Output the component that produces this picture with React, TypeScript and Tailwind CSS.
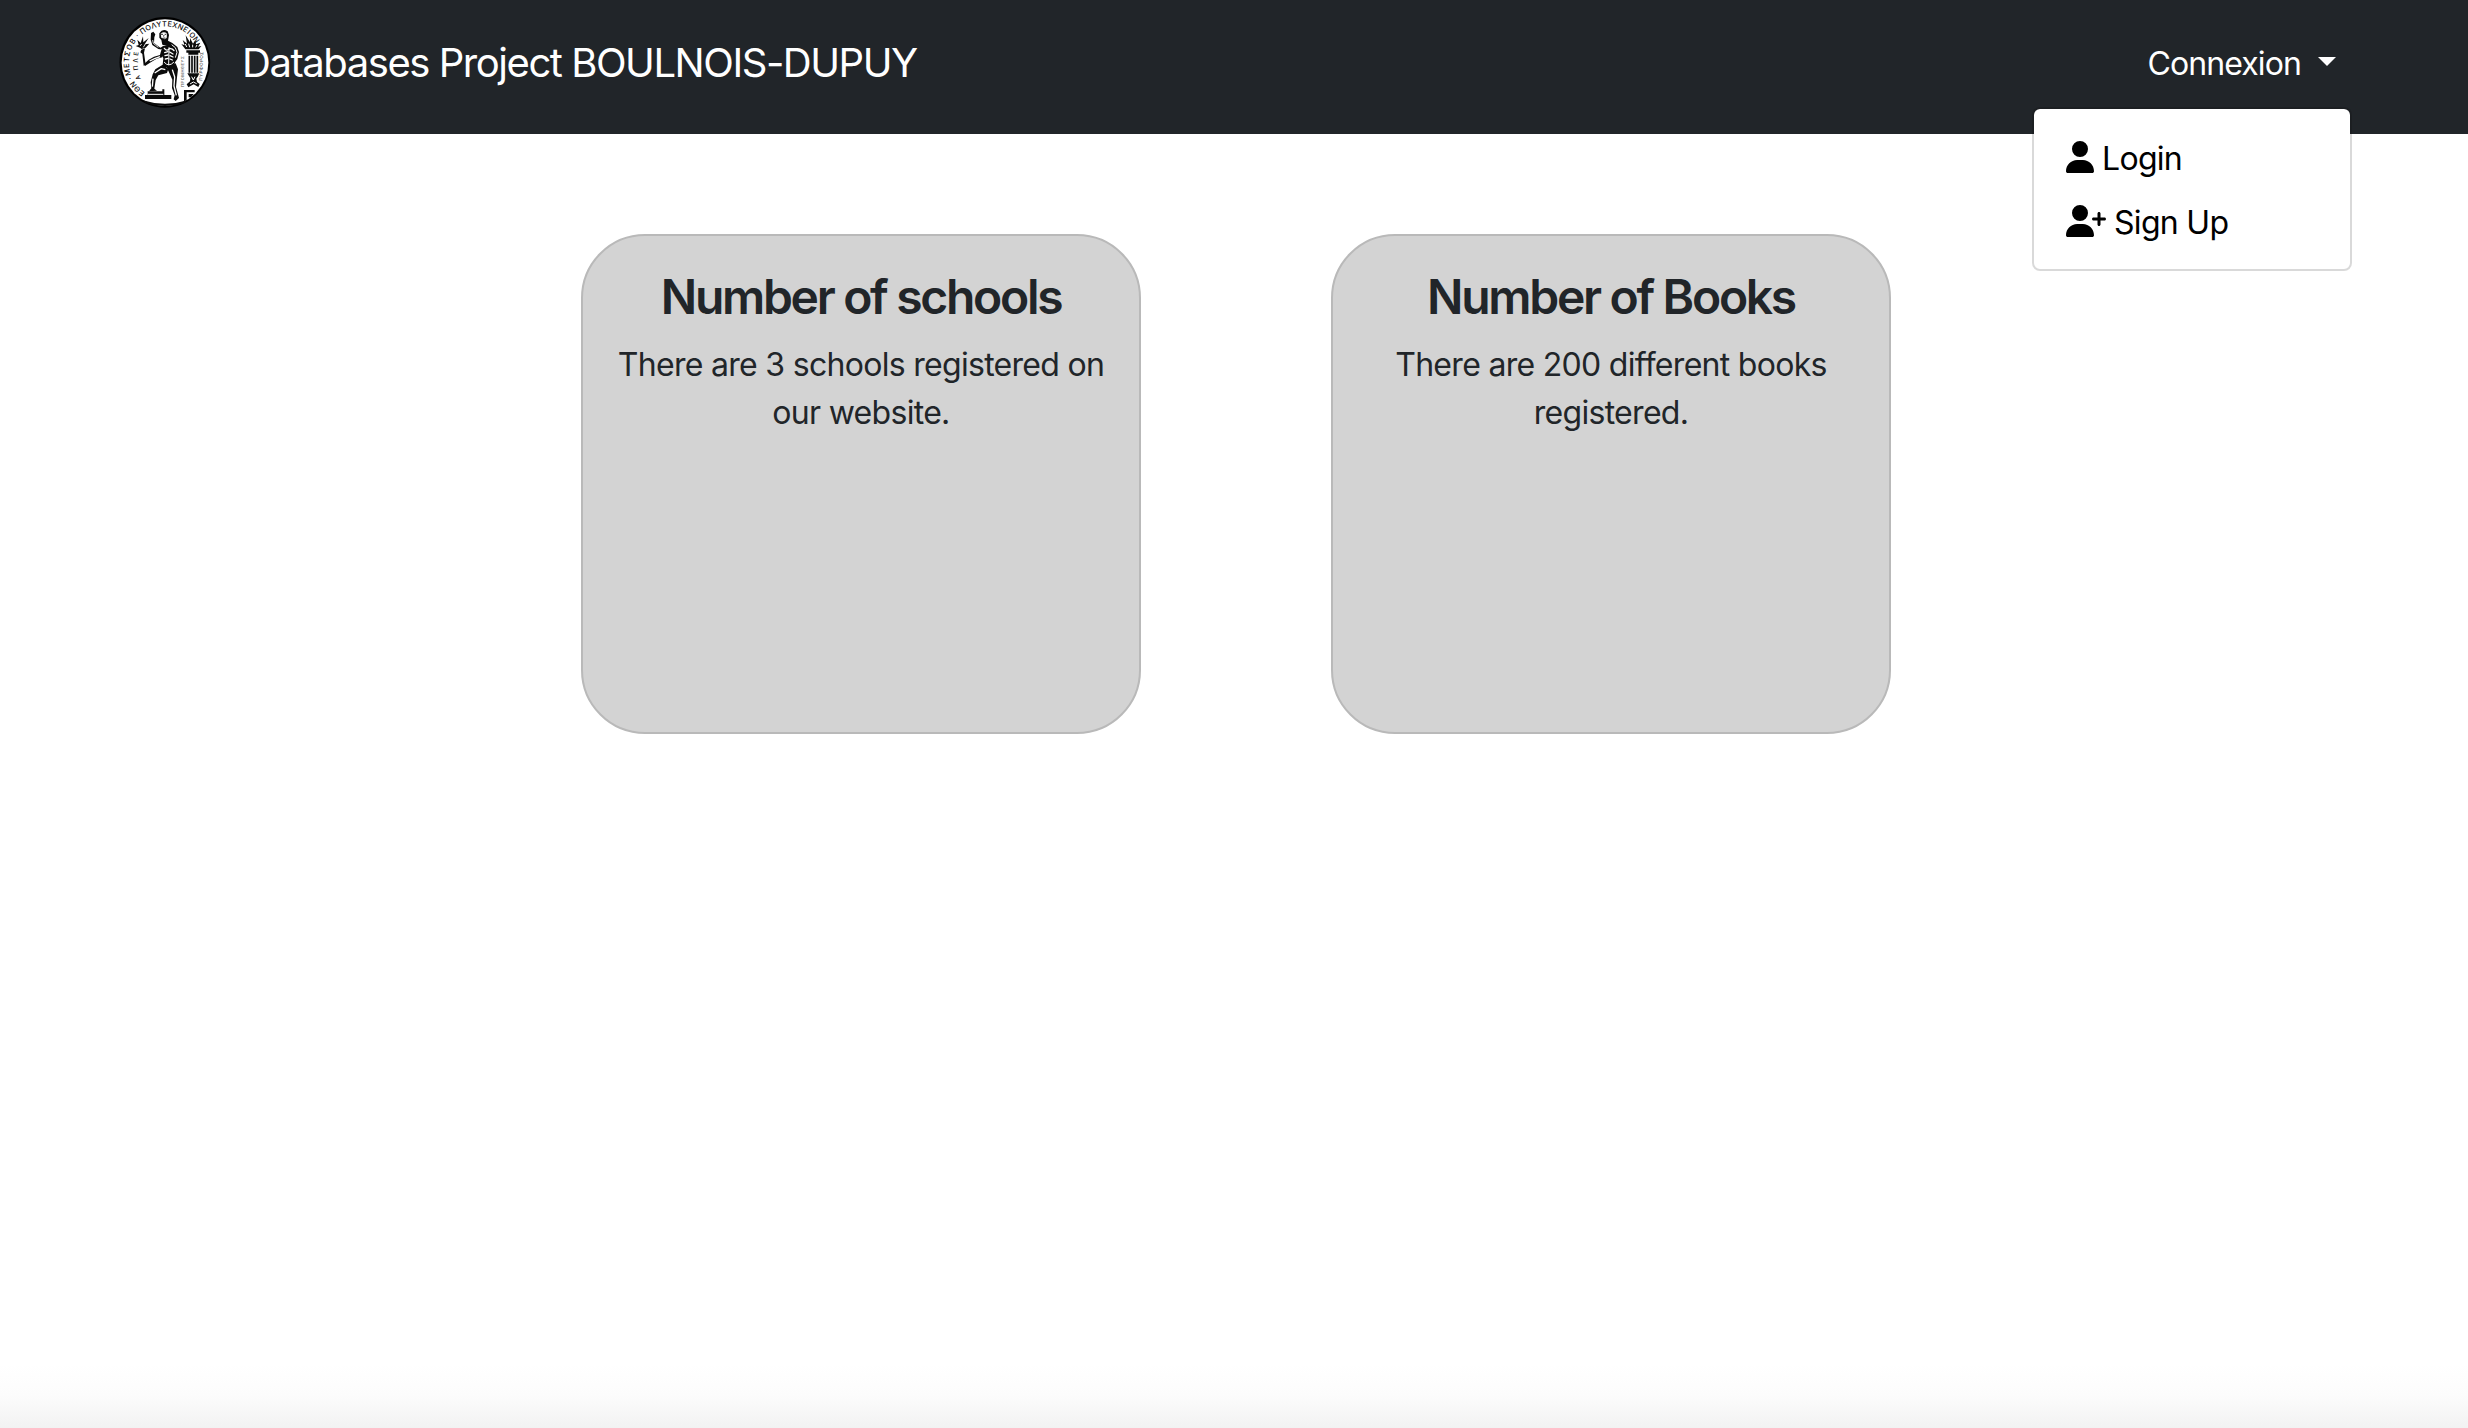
import { FaUser, FaUserPlus } from "react-icons/fa6";

const RIM: [string, number][] = [
  ["Ε", -143], ["Θ", -134], ["Ν", -125], ["·", -115],
  ["Μ", -105], ["Ε", -95], ["Τ", -86], ["Σ", -77], ["Ο", -67], ["Β", -57], ["·", -46],
  ["Π", -35], ["Ο", -26], ["Λ", -17], ["Υ", -9], ["Τ", -1], ["Ε", 7], ["Χ", 15],
  ["Ν", 24], ["Ε", 32], ["Ι", 38], ["Ο", 45], ["Ν", 54],
];

function Seal() {
  return (
    <svg viewBox="0 0 330 330" className="size-[110px]" fill="#0b0b0b">
      <circle cx="164.5" cy="157" r="136" fill="#000" />
      <circle cx="165" cy="157.5" r="130" fill="#fff" />
      <g fontFamily="Inter, sans-serif" fontWeight="500">
        {RIM.map(([letter, angle]) => (
          <text key={angle} x="165" y="49" fontSize="22" textAnchor="middle" transform={`rotate(${angle} 165 157)`}>
            {letter}
          </text>
        ))}
        <text fontSize="19" transform="translate(93 207) rotate(-112)">Α</text>
        <text fontSize="19" transform="translate(85 180) rotate(-98)">Π</text>
        <text fontSize="19" transform="translate(83 158) rotate(-90)">Λ</text>
        <text fontSize="19" transform="translate(84 138) rotate(-82)">Ε</text>
        <text fontSize="12" fill="#555" transform="translate(222 231) rotate(-90)" textLength="92">ΠΡΟΜΗΘΕΥΣ</text>
        <text fontSize="13" fill="#444" transform="translate(277 212) rotate(-88)" textLength="86">ΠΥΡΦΟΡΟΣ</text>
      </g>
      {/* torch */}
      <path d="M77 108 L86 105 L82 89 L92 99 L99 79 L100 97 L116 84 L104 103 L118 101 L107 113 L95 117 L90 113 Z" />
      <path d="M90 108 L95 102 M100 112 L106 102" stroke="#fff" strokeWidth="2.500" />
      <path d="M94 119 L105 115 L102 128 L107 164 L101 167 L97 132 L91 127 Z" />
      {/* raised arm */}
      <path d="M123 69 L130 65 L136 73 L133 82 L132 99 L151 113 L162 107 L159 119 L145 117 L127 105 L122 89 Z" />
      <path d="M128 90 L130 100 L145 112" stroke="#fff" strokeWidth="2.500" fill="none" />
      {/* head and torso */}
      <path d="M148 70 Q158 54 173 64 L177 75 L174 92 L187 99 L202 111 L207 126 L202 147 L193 160 L188 152 L195 139 L194 125 L187 117 L174 109 L157 104 L154 90 L148 83 Z" />
      <path d="M152 71 Q162 63 171 71 L170 84 L163 88 L154 83 Z" fill="#fff" />
      <path d="M152 73 L159 73 M164 73 L169 73 M162 75 L161 80 M157 85 L166 84" stroke="#0b0b0b" strokeWidth="2.500" />
      <path d="M185 104 L196 113 L201 127 L196 143" stroke="#fff" strokeWidth="3" fill="none" />
      <path d="M158 109 L178 106 L197 120 L194 148 L194 170 L157 174 L160 145 L154 130 Z" />
      <g stroke="#fff" strokeWidth="4" fill="none" strokeLinecap="round">
        <path d="M163 115 Q171 126 179 115 Q189 116 192 122" />
        <path d="M164 128 L174 125 M179 126 L189 132 M165 137 L174 135 M180 137 L189 141 M166 147 L174 145 M180 147 L187 150" />
        <path d="M177 113 L176 164 M163 157 Q176 173 191 157" strokeWidth="3" />
      </g>
      {/* arm holding the torch */}
      <path d="M154 119 L162 129 L157 142 L140 146 L120 158 L105 168 L102 162 L116 149 L132 140 L150 135 Z" />
      <path d="M119 153 Q133 145 150 140" stroke="#fff" strokeWidth="4" fill="none" />
      {/* legs */}
      <path d="M158 164 L175 177 L171 189 L145 196 L137 210 L133 236 L141 242 L117 244 L124 235 L122 217 L128 193 L136 178 Z" />
      <path d="M170 172 L197 160 L204 178 L201 202 L198 231 L207 264 L197 273 L191 268 L194 256 L186 234 L187 209 L178 189 Z" />
      <path d="M134 189 L154 176 L166 179 M129 206 L127 230 M187 179 L194 201 L192 228 L199 256" stroke="#fff" strokeWidth="4" fill="none" strokeLinejoin="round" />
      {/* plinth */}
      <path d="M113 244 H157 V238 H163 V255 H184 V267 H105 V255 H113 Z" />
      <path d="M114 253 H160" stroke="#fff" strokeWidth="3" />
      <path d="M98 271 Q165 292 232 271 L224 279 Q165 297 106 279 Z" />
      {/* flames and column */}
      <path d="M226 118 L214 102 L224 106 L218 90 L231 101 L227 76 L240 97 L240 84 L249 101 L256 90 L258 103 L271 98 L264 110 L274 108 L266 118 Z" />
      <path d="M230 111 L226 102 M239 112 L236 101 M248 112 L248 104 M257 112 L261 105" stroke="#fff" strokeWidth="3" />
      <path d="M229 121 H270 V128 H265 V134 H235 V128 H229 Z" />
      <path d="M238 137 V188 M246 137 V188 M254 137 V188 M262 137 V188" stroke="#0b0b0b" strokeWidth="5" />
      <path d="M232 190 H268 L264 199 L259 206 L261 216 L269 222 L265 231 L251 223 L235 232 L230 223 L240 214 L241 205 Z" />
      <path d="M245 200 L250 210 L255 200 M240 222 L250 216 L260 221" stroke="#fff" strokeWidth="3" fill="none" />
      <path d="M222 240 H254 V247 H230 V269 L222 275 Z M236 252 H251 L243 262 H236 Z" />
    </svg>
  );
}

function StatCard({ title, text }: { title: string; text: string }) {
  return (
    <section className="h-[500px] w-[560px] rounded-[64px] border-2 border-[#b9b9b9] bg-[#d3d3d3] px-[30px] pt-[32px] text-center text-[#212529]">
      <h2 className="text-[48px] leading-[58px] font-semibold tracking-[-2.3px]">{title}</h2>
      <p className="mt-[15px] text-[32px] leading-[48px] tracking-[-0.7px]">{text}</p>
    </section>
  );
}

export default function App() {
  return (
    <div className="flex h-[1428px] w-[2468px] flex-col bg-white font-['Inter',sans-serif]">
      <header className="flex h-[134px] shrink-0 items-start justify-between bg-[#212529] pr-[132px] pl-[110px] text-white">
        <div className="flex pt-[10px]">
          <Seal />
          <span className="ml-[22px] pt-[23px] text-[40px] leading-[60px] tracking-[-1.45px] whitespace-nowrap">
            Databases Project BOULNOIS-DUPUY
          </span>
        </div>
        <div className="relative flex items-center pt-[40px]">
          <span className="text-[32px] leading-[48px] tracking-[-0.9px]">Connexion</span>
          <span className="mb-[5px] ml-[17px] border-x-[9px] border-t-[9px] border-x-transparent border-t-white" />
          <div className="absolute top-[107px] right-[-16px] z-10 flex h-[164px] w-[320px] flex-col rounded-[8px] border-2 border-black/15 bg-white bg-clip-padding py-[16px] text-[32px] leading-[48px] tracking-[-0.7px] text-black">
            <a className="flex h-16 items-center pl-8">
              <FaUser className="h-8 w-7" />
              <span className="ml-[8px] pt-[3px]">Login</span>
            </a>
            <a className="flex h-16 items-center pl-8">
              <FaUserPlus className="h-8 w-10" />
              <span className="ml-[8px] pt-[3px]">Sign Up</span>
            </a>
          </div>
        </div>
      </header>
      <main className="flex flex-1 gap-[190px] pt-[100px] pl-[581px]">
        <StatCard title="Number of schools" text="There are 3 schools registered on our website." />
        <StatCard title="Number of Books" text="There are 200 different books registered." />
      </main>
      <div className="h-[64px] shrink-0 bg-linear-to-b from-white via-[#fcfcfc] to-[#f2f2f2]" />
    </div>
  );
}
